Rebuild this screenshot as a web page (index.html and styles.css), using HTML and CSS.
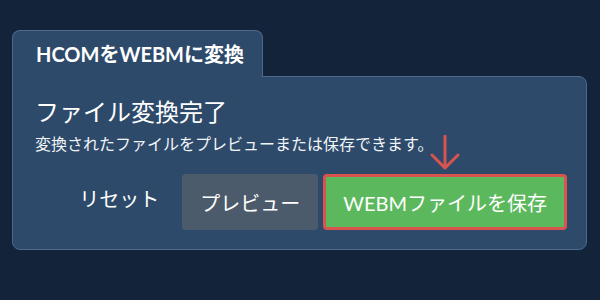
FILE: index.html
```html
<html>
<head>
    <meta charset="utf-8">
    <title>HCOMをWEBMに変換</title>
    <link rel="stylesheet" href="styles.css">
</head>
<body>
<div class="app">
    <div class="tab">HCOMをWEBMに変換</div>
    <div class="panel">
        <div class="heading">ファイル変換完了</div>
        <div class="desc">変換されたファイルをプレビューまたは保存できます。</div>
        <div class="operate">
            <input class="btn btn-reset" type="button" value="リセット">
            <input class="btn btn-preview" type="button" value="プレビュー">
            <div class="save-wrap">
                <svg class="arrow" width="30" height="36" viewBox="0 0 30 36">
                    <path d="M15 1 L15 33 M2 20 L15 33 L28 20" fill="none" stroke="#d9534f" stroke-width="3" stroke-linecap="round" stroke-linejoin="round"/>
                </svg>
                <input class="btn btn-save" type="button" value="WEBMファイルを保存">
            </div>
        </div>
    </div>
</div>
</body>
</html>
```

FILE: styles.css
```css
body {
    margin: 0;
    background-color: #12233a;
    --panelColor: #2d4a6b;
    --borderColor: #4d6a8c;
    --redColor: #d9534f;
}

.app {
    font-family: Lato, "Noto Sans CJK JP", sans-serif;
    color: #fff;
    padding: 30px 13px 0 12px;
}

.tab {
    display: inline-block;
    position: relative;
    z-index: 1;
    font-size: 20px;
    font-weight: 700;
    line-height: 46px;
    height: 46px;
    padding: 0 18px 0 23px;
    margin-bottom: -1px;
    background-color: var(--panelColor);
    border: 1px solid var(--borderColor);
    border-bottom: 0;
    border-radius: 8px 8px 0 0;
}

.panel {
    background-color: var(--panelColor);
    border: 1px solid var(--borderColor);
    border-radius: 0 8px 8px 8px;
    padding: 19px 19px 19px 22px;
}

.heading {
    font-size: 24px;
    line-height: 32px;
}

.desc {
    font-size: 16px;
    line-height: 24px;
    margin-top: 4px;
    color: #f2f5f8;
}

.operate {
    display: flex;
    justify-content: flex-end;
    align-items: center;
    gap: 5px;
    margin-top: 18px;
}

.btn {
    font-family: Lato, "Noto Sans CJK JP", sans-serif;
    font-size: 20px;
    color: #fff;
    height: 56px;
    padding: 0 18px;
    border: 0;
    border-radius: 4px;
    outline: 0;
    cursor: pointer;
}

.btn-reset {
    background-color: transparent;
    padding-bottom: 8px;
}

.btn-preview {
    background-color: #4b5b6c;
}

.save-wrap {
    position: relative;
}

.btn-save {
    display: block;
    background-color: #5cb85c;
    border: 3px solid var(--redColor);
    padding: 0 17px;
}

.arrow {
    position: absolute;
    left: 50%;
    top: -39px;
    margin-left: -15px;
}
```
